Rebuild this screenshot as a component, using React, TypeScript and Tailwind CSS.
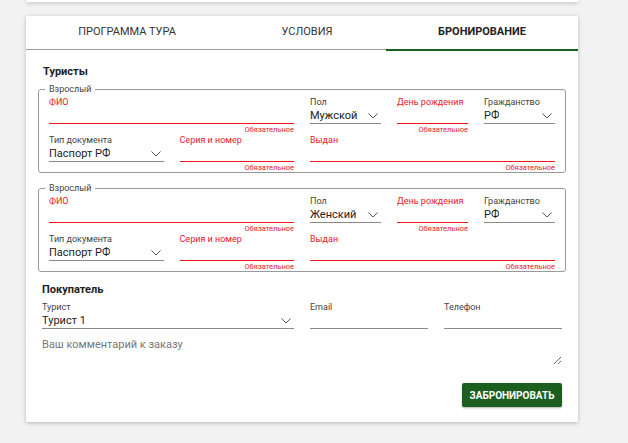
import React from 'react';

const RED = 'text-[#e8202a]';

const Chevron = () => (
    <svg width="10" height="6" viewBox="0 0 10 6" className="mr-[3px] shrink-0">
        <polyline points="0.5,0.5 5,5 9.5,0.5" fill="none" stroke="#555" strokeWidth="1" />
    </svg>
);

type FieldProps = {
    label: string;
    value?: string;
    required?: boolean;
    select?: boolean;
    className?: string;
    hint?: boolean;
};

// one underlined field: label, value, underline, optional "Обязательное"
const Field = ({ label, value, required, select, className = '', hint = true }: FieldProps) => (
    <div className={`flex flex-col ${className}`}>
        <div className={`h-3 whitespace-nowrap text-[9px] leading-3 ${required ? RED : 'text-[#444]'}`}>{label}</div>
        <div
            className={`flex h-4 items-center justify-between border-b text-[11px] leading-4 text-[#222] ${
                required ? 'border-[#f01818]' : 'border-[#8a8a8a]'
            }`}
        >
            <span className="truncate">{value}</span>
            {select && <Chevron />}
        </div>
        {hint && (
            <div className={`h-[10px] whitespace-nowrap text-right text-[7.5px] leading-[11px] ${RED}`}>
                {required ? 'Обязательное' : ''}
            </div>
        )}
    </div>
);

const Tourist = ({ gender }: { gender: string }) => (
    <div className="relative -mx-1 rounded-[3px] border border-[#9a9a9a] px-[10px] pt-[6px]">
        <span className="absolute left-[6px] top-[-7px] bg-white px-1 text-[9px] leading-3 text-[#444]">
            Взрослый
        </span>
        <div className="grid grid-cols-2 gap-x-4">
            <Field label="ФИО" required />
            <div className="grid grid-cols-3 gap-x-4">
                <Field label="Пол" value={gender} select />
                <Field label="День рождения" required />
                <Field label="Гражданство" value="РФ" select />
            </div>
            <div className="grid grid-cols-2 gap-x-4">
                <Field label="Тип документа" value="Паспорт РФ" select />
                <Field label="Серия и номер" required />
            </div>
            <Field label="Выдан" required />
        </div>
    </div>
);

const tabs = [
    { name: 'Программа тура', w: 'w-[202px]' },
    { name: 'Условия', w: 'w-[158px]' },
    { name: 'Бронирование', w: 'w-[192px]', active: true },
];

export default function App() {
    return (
        <div className="min-h-[443px] bg-[#f2f2f2] font-['Roboto',sans-serif]">
            <div className="mx-[26px] w-[552px]">
                {/* bottom edge of the card above */}
                <div className="h-[2px] bg-white shadow-[0_1px_4px_rgba(0,0,0,0.3)]" />

                <div className="mt-[14px] bg-white shadow-[0_1px_4px_rgba(0,0,0,0.25)]">
                    <div className="relative flex border-b border-[#9e9e9e]">
                        {tabs.map((t) => (
                            <div
                                key={t.name}
                                className={`relative flex h-[33px] items-center justify-center text-[11px] uppercase ${t.w} ${
                                    t.active ? 'font-bold text-[#222]' : 'text-[#333]'
                                }`}
                            >
                                {t.name}
                                {t.active && <div className="absolute bottom-[-2px] left-0 right-0 h-[2px] bg-[#1b5e20]" />}
                            </div>
                        ))}
                    </div>

                    <div className="px-4 pb-[15px] pt-[15px]">
                        <div className="mb-[10px] pl-px text-[11px] font-bold leading-[14px] text-[#222]">Туристы</div>
                        <div className="flex flex-col gap-[15px]">
                            <Tourist gender="Мужской" />
                            <Tourist gender="Женский" />
                        </div>

                        <div className="mt-[11px] text-[11px] font-bold leading-[14px] text-[#222]">Покупатель</div>
                        <div className="mt-[4px] grid grid-cols-[252px_1fr_1fr] gap-x-4">
                            <Field label="Турист" value="Турист 1" select hint={false} />
                            <Field label="Email" hint={false} />
                            <Field label="Телефон" hint={false} />
                        </div>

                        <textarea
                            placeholder="Ваш комментарий к заказу"
                            className="mt-[8px] block h-[28px] w-full resize-y text-[11px] leading-4 text-[#222] outline-none placeholder:text-[#777]"
                        />

                        <div className="mt-[18px] flex justify-end">
                            <button className="h-6 w-[100px] rounded-[2px] bg-[#1b5e20] text-[10px] font-bold uppercase text-white shadow-[0_1px_2px_rgba(0,0,0,0.3)]">
                                Забронировать
                            </button>
                        </div>
                    </div>
                </div>
            </div>
        </div>
    );
}
